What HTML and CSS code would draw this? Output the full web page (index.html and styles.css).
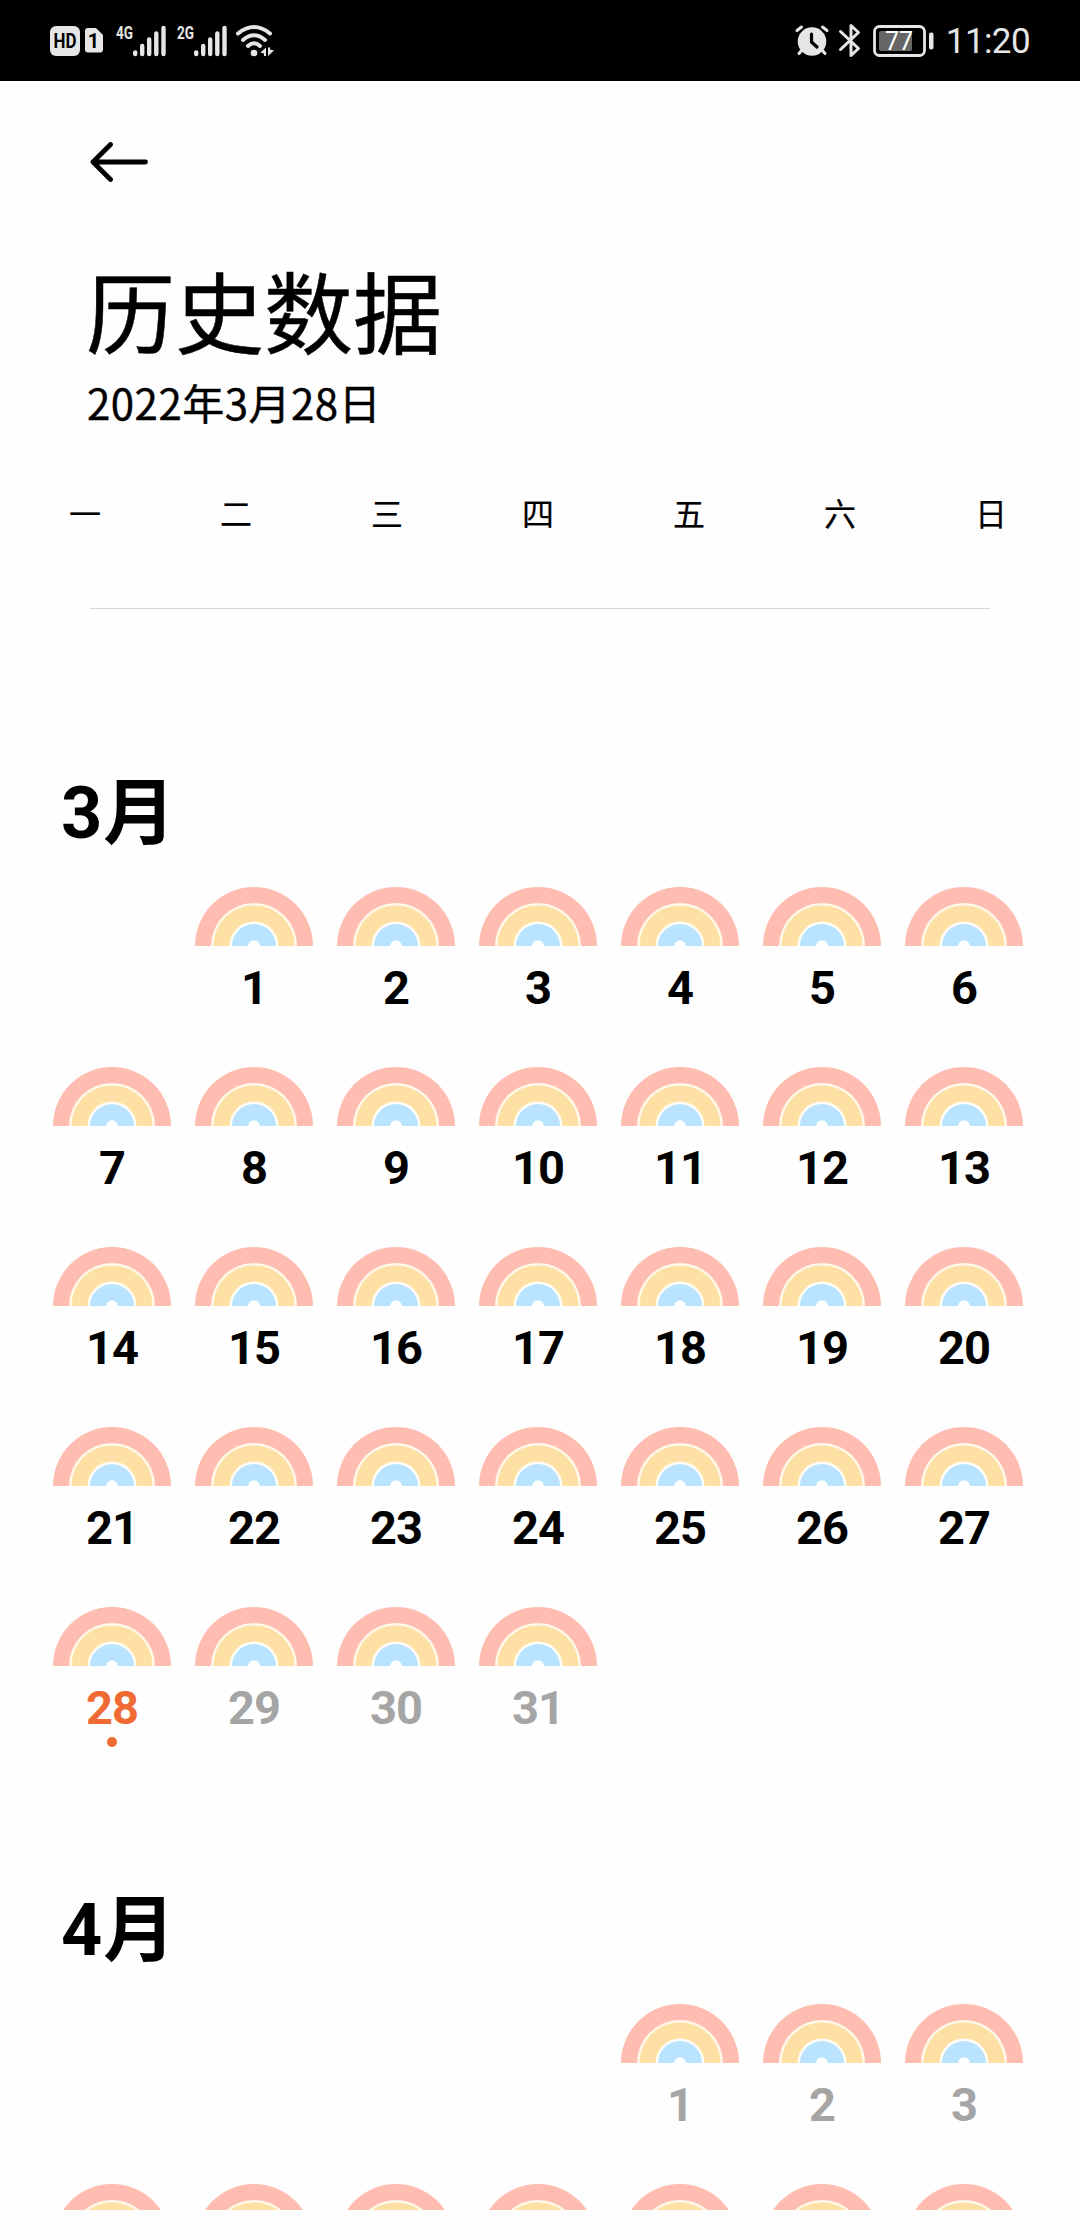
FILE: index.html
```html
<!DOCTYPE html>
<html lang="zh-CN">
<head>
  <meta charset="UTF-8">
  <meta name="viewport" content="width=device-width, initial-scale=1.0">
  <title>历史数据</title>
  <link rel="stylesheet" href="styles.css">
</head>
<body>
  <div class="status-bar">
    <div class="status-left">
      <svg class="hd" width="30" height="30" viewBox="0 0 30 30">
        <rect width="30" height="30" rx="6" fill="#e6e6e6"/>
        <text x="3.500" y="22" textLength="23" lengthAdjust="spacingAndGlyphs" font-size="20" font-weight="700" fill="#000">HD</text>
      </svg>
      <svg class="sim" width="18" height="25" viewBox="0 0 18 25">
        <path d="M3 0H11L18 7V21.500Q18 24.500 15 24.500H3Q0 24.500 0 21.500V3Q0 0 3 0Z" fill="#e6e6e6"/>
        <text x="8.500" y="19.500" text-anchor="middle" font-size="20" font-weight="700" fill="#000">1</text>
      </svg>
      <svg class="signal" width="51" height="32" viewBox="0 0 51 32">
        <text x="0" y="13.500" textLength="17" lengthAdjust="spacingAndGlyphs" font-size="19" font-weight="700" fill="#e6e6e6">4G</text>
        <path d="M19.200 27.500V29M26.200 21V29M33.200 14.500V29M40.300 8.500V29M47.500 3V29" class="bars"/>
      </svg>
      <svg class="signal" width="51" height="32" viewBox="0 0 51 32">
        <text x="0" y="13.500" textLength="17" lengthAdjust="spacingAndGlyphs" font-size="19" font-weight="700" fill="#e6e6e6">2G</text>
        <path d="M19.200 27.500V29M26.200 21V29M33.200 14.500V29M40.300 8.500V29M47.500 3V29" class="bars"/>
      </svg>
      <svg class="wifi" width="38" height="32" viewBox="0 0 38 32">
        <path d="M2 8.500Q18 -4.500 34 8.500M7 15Q18 5.500 29 15M12 21Q18 15.500 24 21" fill="none" stroke="#e6e6e6" stroke-width="4" stroke-linecap="round"/>
        <circle cx="18" cy="28" r="3.300" fill="#e6e6e6"/>
        <path d="M30 22.500V31H28V28.500L24.500 27.500ZM32 31V22.500H34V24.500L38 25.500Z" fill="#e6e6e6"/>
      </svg>
    </div>
    <div class="status-right">
      <svg class="alarm" width="34" height="31" viewBox="0 0 34 31">
        <path d="M2 5.500L6.500 2M32 5.500L27.500 2M7 25L4 28.500M27 25L30 28.500" stroke="#e6e6e6" stroke-width="3" stroke-linecap="round"/>
        <circle cx="17" cy="16.500" r="14.300" fill="#e6e6e6"/>
        <path d="M16.500 9V17L22 22" fill="none" stroke="#000" stroke-width="3.200" stroke-linecap="round" stroke-linejoin="round"/>
      </svg>
      <svg class="bluetooth" width="22" height="35" viewBox="0 0 22 35">
        <path d="M1.500 8.500L19.500 25.500L12 32.500V2.500L19.500 9.500L1.500 26.500" fill="none" stroke="#e6e6e6" stroke-width="3" stroke-linejoin="round" stroke-linecap="round"/>
      </svg>
      <svg class="battery" width="61" height="32" viewBox="0 0 61 32">
        <rect x="1.500" y="1.500" width="50" height="29" rx="5" fill="none" stroke="#e6e6e6" stroke-width="2.800"/>
        <rect x="6" y="6" width="33" height="20" rx="2" fill="#666"/>
        <rect x="56" y="7.500" width="4.500" height="17" rx="2" fill="#e6e6e6"/>
        <text x="26" y="25" text-anchor="middle" font-size="25" fill="#fff">77</text>
      </svg>
      <span class="clock">11:20</span>
    </div>
  </div>

  <header class="header">
    <svg class="back" width="58" height="40" viewBox="0 0 58 40">
      <path d="M20.500 2.500L3 20L20.500 37.500M3 20H55.500" fill="none" stroke="#000" stroke-width="4.800" stroke-linecap="round" stroke-linejoin="round"/>
    </svg>
    <h1 class="title">历史数据</h1>
    <p class="date">2022年3月28日</p>
  </header>

  <div class="weekdays">
    <span>一</span>
    <span>二</span>
    <span>三</span>
    <span>四</span>
    <span>五</span>
    <span>六</span>
    <span>日</span>
  </div>
  <hr class="divider">

  <main class="calendar" id="calendar"></main>

  <script>
    const today = 28;

    // blanks: empty cells before the first day
    // pastUntil: last day that is not greyed out
    // numbered: last day with its number on screen
    const months = [
      { name: '3月', blanks: 1, days: 31, pastUntil: today, numbered: 31 },
      { name: '4月', blanks: 4, days: 10, pastUntil: 0, numbered: 3 }
    ];

    const rainbow = `<svg class="rainbow" width="118" height="59" viewBox="0 0 118 59">
      <circle cx="59" cy="59" r="59" fill="#febdb0"/>
      <circle cx="59" cy="59" r="43" fill="#fff8e9"/>
      <circle cx="59" cy="59" r="40.500" fill="#fee0a5"/>
      <circle cx="59" cy="59" r="24.500" fill="#fffdf5"/>
      <circle cx="59" cy="59" r="22" fill="#b9e3fe"/>
      <circle cx="59" cy="59" r="5.800" fill="#fff"/>
    </svg>`;

    const calendar = document.getElementById('calendar');

    months.forEach(month => {
      let cells = '';
      for (let i = 0; i < month.blanks; i++) {
        cells += '<div class="day"></div>';
      }
      for (let d = 1; d <= month.days; d++) {
        let state = '';
        if (d > month.pastUntil) {
          state = ' future';
        } else if (d === month.pastUntil) {
          state = ' today';
        }
        const number = d <= month.numbered ? `<span class="number">${d}</span>` : '';
        cells += `<div class="day${state}">${rainbow}${number}</div>`;
      }

      const section = document.createElement('section');
      section.className = 'month';
      section.innerHTML = `<h2 class="month-name">${month.name}</h2><div class="days">${cells}</div>`;
      calendar.appendChild(section);
    });
  </script>
</body>
</html>
```

FILE: styles.css
```css
* {
  box-sizing: border-box;
}
body {
  margin: 0;
  width: 1080px;
  height: 2240px;
  overflow: hidden;
  background: #fefefe;
  color: #000;
  font-family: Roboto, "Noto Sans CJK SC", sans-serif;
}
svg {
  display: block;
  flex-shrink: 0;
}
h1, h2, p {
  margin: 0;
}

/* status bar */
.status-bar {
  display: flex;
  justify-content: space-between;
  height: 81px;
  padding: 0 50px;
  background: #000;
  color: #e6e6e6;
}
.status-bar svg {
  overflow: visible;
}
.status-left,
.status-right {
  display: flex;
  align-items: center;
}
.sim {
  margin: 0 13px 0 5px;
}
.signal {
  margin-right: 10px;
}
.signal + .wifi {
  margin-left: -2px;
}
.bars {
  fill: none;
  stroke: #e6e6e6;
  stroke-width: 4.4;
  stroke-linecap: round;
}
.bluetooth {
  margin: 0 12px 0 10px;
}
.clock {
  margin-left: 12px;
  padding-top: 3px;
  font-size: 35px;
  line-height: 40px;
  letter-spacing: -0.6px;
}

/* header */
.header {
  padding: 61px 86px 0;
}
.back {
  margin-left: 4px;
}
.title {
  margin-top: 90px;
  font-size: 89px;
  font-weight: 400;
  line-height: 90px;
  -webkit-text-stroke: 0.5px #000;
}
.date {
  margin: 15px 0 0 1px;
  font-size: 42px;
  line-height: 50px;
  letter-spacing: 0.5px;
  font-family: "Noto Sans CJK SC", sans-serif;
  -webkit-text-stroke: 0.4px #000;
}

.weekdays {
  display: flex;
  justify-content: space-between;
  padding: 0 73px 0 69px;
  margin-top: 68px;
  font-size: 32px;
  line-height: 40px;
  -webkit-text-stroke: 0.2px #000;
}
.divider {
  width: 900px;
  height: 1px;
  margin: 73px auto 0;
  border: none;
  background: #d6d6d6;
}

/* calendar */
.calendar {
  height: 1601px;
  padding-top: 61px;
  overflow: hidden;
}
.month {
  padding: 104px 43px 0 41px;
}
.month-name {
  margin: 0 0 33px 20px;
  font-size: 72px;
  font-weight: 700;
  line-height: 80px;
  letter-spacing: 1px;
}
.days {
  display: grid;
  grid-template-columns: repeat(7, 142px);
  grid-auto-rows: 180px;
}
.day {
  display: flex;
  flex-direction: column;
  align-items: center;
}
.number {
  margin-top: 17px;
  font-size: 47px;
  font-weight: 700;
  line-height: 50px;
  letter-spacing: -1px;
}
.future .number {
  color: #a5a5a5;
}
.today .number {
  color: #f06a33;
}
.today::after {
  content: "";
  width: 10px;
  height: 10px;
  margin-top: 4px;
  border-radius: 50%;
  background: #f06a33;
}
```
